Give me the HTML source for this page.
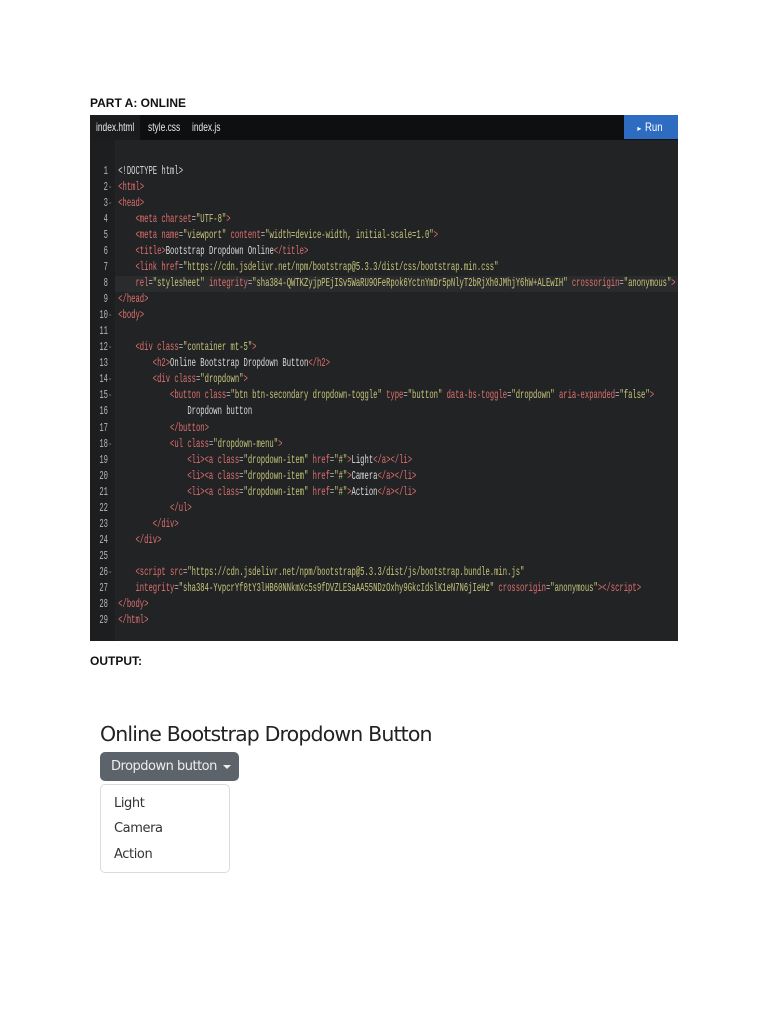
<!DOCTYPE html>
<html><head><meta charset="utf-8"><style>
body{margin:0;width:768px;height:1024px;background:#fff;position:relative;font-family:"Liberation Sans",sans-serif;overflow:hidden}
.lbl{position:absolute;left:90px;font-weight:bold;font-size:12px;color:#111}
#ed{position:absolute;left:90px;top:115px;width:588px;height:526px;background:#222325;overflow:hidden}
#tabs{position:absolute;left:0;top:0;width:588px;height:25px;background:#0e0f10}
.tab{position:absolute;top:0;height:25px;line-height:24px;font-size:12px;color:#e8e8e8;transform:scaleX(.7);transform-origin:left}
#act{position:absolute;left:0;top:0;width:50px;height:25px;background:#1b1c1d}
#run{position:absolute;left:534px;top:0;width:54px;height:24px;background:#2d6cc0;color:#fff;font-size:12px;line-height:24px}
#gut{position:absolute;left:0;top:25px;width:25px;height:501px;background:#1d1e20}
#hl{position:absolute;left:25px;top:161px;width:563px;height:16px;background:#2a2b2d}
#code{position:absolute;left:0;top:48px;font-family:"Liberation Mono",monospace;font-size:12px;color:#dcdcdc;transform:scaleX(.6);transform-origin:left top}
#code div{height:16.04px;line-height:16.04px;white-space:pre;overflow:visible}
.n{display:inline-block;width:30px;text-align:right;color:#b5b5b5}
.f{display:inline-block;width:17px;color:#777}
.t{color:#e0706f}.s{color:#c9c67a}.e{color:#aaa}
h2{position:absolute;left:100px;top:722px;margin:0;font-size:20.5px;font-weight:normal;color:#222;font-family:"DejaVu Sans",sans-serif;letter-spacing:-.85px}
#btn{position:absolute;left:100px;top:752px;width:139px;height:29px;background:#5c636a;border-radius:5px;color:#eee;font-size:13px;line-height:29px;box-sizing:border-box;padding-left:11px;font-family:"DejaVu Sans",sans-serif;letter-spacing:-.5px}
#btn i{position:absolute;left:123px;top:13px;border-left:4px solid transparent;border-right:4px solid transparent;border-top:4px solid #eee}
#menu{position:absolute;left:100px;top:784px;width:130px;height:89px;border:1px solid #dcdcdc;border-radius:5px;box-sizing:border-box}
.it{position:absolute;left:13px;font-size:13px;color:#333;font-family:"DejaVu Sans",sans-serif;letter-spacing:-.4px}
</style></head><body>
<div class="lbl" style="top:96px">PART A: ONLINE</div>
<div id="ed">
<div id="tabs"><div id="act"></div>
<div class="tab" style="left:6px">index.html</div><div class="tab" style="left:58px">style.css</div><div class="tab" style="left:102px">index.js</div>
<div id="run">&nbsp;&nbsp;&nbsp;&nbsp;<span style="font-size:8px">▸</span> <span style="display:inline-block;transform:scaleX(.8);transform-origin:left">Run</span></div></div>
<div id="gut"></div><div id="hl"></div>
<div id="code">
<div><span class="n">1</span><span class="f"></span>&lt;!DOCTYPE html&gt;</div>
<div><span class="n">2</span><span class="f">-</span><span class="t">&lt;html&gt;</span></div>
<div><span class="n">3</span><span class="f">-</span><span class="t">&lt;head&gt;</span></div>
<div><span class="n">4</span><span class="f"></span>    <span class="t">&lt;meta charset</span><span class="e">=</span><span class="s">"UTF-8"</span><span class="t">&gt;</span></div>
<div><span class="n">5</span><span class="f"></span>    <span class="t">&lt;meta name</span><span class="e">=</span><span class="s">"viewport"</span> <span class="t">content</span><span class="e">=</span><span class="s">"width=device-width, initial-scale=1.0"</span><span class="t">&gt;</span></div>
<div><span class="n">6</span><span class="f"></span>    <span class="t">&lt;title&gt;</span>Bootstrap Dropdown Online<span class="t">&lt;/title&gt;</span></div>
<div><span class="n">7</span><span class="f"></span>    <span class="t">&lt;link href</span><span class="e">=</span><span class="s">"https://cdn.jsdelivr.net/npm/bootstrap@5.3.3/dist/css/bootstrap.min.css"</span></div>
<div><span class="n">8</span><span class="f"></span>    <span class="t">rel</span><span class="e">=</span><span class="s">"stylesheet"</span> <span class="t">integrity</span><span class="e">=</span><span class="s">"sha384-QWTKZyjpPEjISv5WaRU9OFeRpok6YctnYmDr5pNlyT2bRjXh0JMhjY6hW+ALEwIH"</span> <span class="t">crossorigin</span><span class="e">=</span><span class="s">"anonymous"</span><span class="t">&gt;</span></div>
<div><span class="n">9</span><span class="f"></span><span class="t">&lt;/head&gt;</span></div>
<div><span class="n">10</span><span class="f">-</span><span class="t">&lt;body&gt;</span></div>
<div><span class="n">11</span><span class="f"></span></div>
<div><span class="n">12</span><span class="f">-</span>    <span class="t">&lt;div class</span><span class="e">=</span><span class="s">"container mt-5"</span><span class="t">&gt;</span></div>
<div><span class="n">13</span><span class="f"></span>        <span class="t">&lt;h2&gt;</span>Online Bootstrap Dropdown Button<span class="t">&lt;/h2&gt;</span></div>
<div><span class="n">14</span><span class="f">-</span>        <span class="t">&lt;div class</span><span class="e">=</span><span class="s">"dropdown"</span><span class="t">&gt;</span></div>
<div><span class="n">15</span><span class="f">-</span>            <span class="t">&lt;button class</span><span class="e">=</span><span class="s">"btn btn-secondary dropdown-toggle"</span> <span class="t">type</span><span class="e">=</span><span class="s">"button"</span> <span class="t">data-bs-toggle</span><span class="e">=</span><span class="s">"dropdown"</span> <span class="t">aria-expanded</span><span class="e">=</span><span class="s">"false"</span><span class="t">&gt;</span></div>
<div><span class="n">16</span><span class="f"></span>                Dropdown button</div>
<div><span class="n">17</span><span class="f"></span>            <span class="t">&lt;/button&gt;</span></div>
<div><span class="n">18</span><span class="f">-</span>            <span class="t">&lt;ul class</span><span class="e">=</span><span class="s">"dropdown-menu"</span><span class="t">&gt;</span></div>
<div><span class="n">19</span><span class="f"></span>                <span class="t">&lt;li&gt;&lt;a class</span><span class="e">=</span><span class="s">"dropdown-item"</span> <span class="t">href</span><span class="e">=</span><span class="s">"#"</span><span class="t">&gt;</span>Light<span class="t">&lt;/a&gt;&lt;/li&gt;</span></div>
<div><span class="n">20</span><span class="f"></span>                <span class="t">&lt;li&gt;&lt;a class</span><span class="e">=</span><span class="s">"dropdown-item"</span> <span class="t">href</span><span class="e">=</span><span class="s">"#"</span><span class="t">&gt;</span>Camera<span class="t">&lt;/a&gt;&lt;/li&gt;</span></div>
<div><span class="n">21</span><span class="f"></span>                <span class="t">&lt;li&gt;&lt;a class</span><span class="e">=</span><span class="s">"dropdown-item"</span> <span class="t">href</span><span class="e">=</span><span class="s">"#"</span><span class="t">&gt;</span>Action<span class="t">&lt;/a&gt;&lt;/li&gt;</span></div>
<div><span class="n">22</span><span class="f"></span>            <span class="t">&lt;/ul&gt;</span></div>
<div><span class="n">23</span><span class="f"></span>        <span class="t">&lt;/div&gt;</span></div>
<div><span class="n">24</span><span class="f"></span>    <span class="t">&lt;/div&gt;</span></div>
<div><span class="n">25</span><span class="f"></span></div>
<div><span class="n">26</span><span class="f">-</span>    <span class="t">&lt;script src</span><span class="e">=</span><span class="s">"https://cdn.jsdelivr.net/npm/bootstrap@5.3.3/dist/js/bootstrap.bundle.min.js"</span></div>
<div><span class="n">27</span><span class="f"></span>    <span class="t">integrity</span><span class="e">=</span><span class="s">"sha384-YvpcrYf0tY3lHB60NNkmXc5s9fDVZLESaAA55NDzOxhy9GkcIdslK1eN7N6jIeHz"</span> <span class="t">crossorigin</span><span class="e">=</span><span class="s">"anonymous"</span><span class="t">&gt;&lt;/script&gt;</span></div>
<div><span class="n">28</span><span class="f"></span><span class="t">&lt;/body&gt;</span></div>
<div><span class="n">29</span><span class="f"></span><span class="t">&lt;/html&gt;</span></div>
</div>
</div>
<div class="lbl" style="top:654px">OUTPUT:</div>
<h2>Online Bootstrap Dropdown Button</h2>
<div id="btn">Dropdown button<i></i></div>
<div id="menu"><div class="it" style="top:11px">Light</div><div class="it" style="top:36px">Camera</div><div class="it" style="top:62px">Action</div></div>
</body></html>
